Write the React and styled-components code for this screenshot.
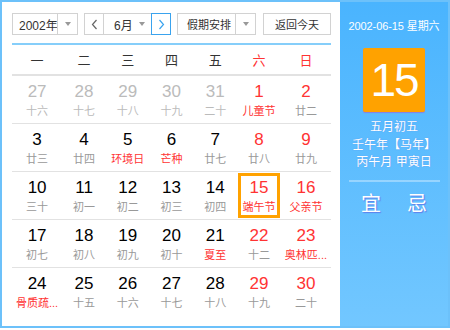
import React from 'react';
import styled, { createGlobalStyle } from 'styled-components';

const GlobalStyle = createGlobalStyle`
  body {
    margin: 0;
    background: #fff;
    font-family: "Liberation Sans", "Noto Sans CJK SC", sans-serif;
  }
`;

const Frame = styled.div`
  width: 450px;
  height: 328px;
  box-sizing: border-box;
  border: 2px solid #6cc1fa;
  display: flex;
`;

const Main = styled.div`
  width: 338px;
  box-sizing: border-box;
  padding: 11px 9px 0 10px;
`;

const Toolbar = styled.div`
  display: flex;
  height: 22px;
  gap: 6px;
`;

const SelectBox = styled.div`
  width: ${(p) => p.w}px;
  box-sizing: border-box;
  border: 1px solid #d2d2d2;
  display: flex;
  align-items: center;
  font-size: 12px;
  color: #333;
  background: #fff;
`;

const SelectText = styled.div`
  flex: 1;
  padding-left: ${(p) => p.pad || 6}px;
  white-space: nowrap;
  overflow: hidden;
  font-size: ${(p) => (p.small ? 11 : 12)}px;
`;

const ArrowPart = styled.div`
  width: 19px;
  flex: none;
  height: 100%;
  border-left: ${(p) => (p.plain ? 'none' : '1px solid #d2d2d2')};
  display: flex;
  align-items: center;
  justify-content: center;
  &::after {
    content: '';
    border-left: 3.5px solid transparent;
    border-right: 3.5px solid transparent;
    border-top: 4px solid #999;
  }
`;

const MonthGroup = styled.div`
  width: 87px;
  display: flex;
`;

const NavButton = styled.div`
  width: 20px;
  flex: none;
  box-sizing: border-box;
  border: 1px solid ${(p) => (p.active ? '#3aa3ee' : '#d2d2d2')};
  display: flex;
  align-items: center;
  justify-content: center;
  color: ${(p) => (p.active ? '#3aa3ee' : '#666')};
`;

const MonthBox = styled.div`
  flex: 1;
  min-width: 0;
  box-sizing: border-box;
  border-top: 1px solid #d2d2d2;
  border-bottom: 1px solid #d2d2d2;
  display: flex;
  align-items: center;
  font-size: 12px;
  color: #333;
`;

const TodayButton = styled.div`
  width: 68px;
  margin-left: 1px;
  box-sizing: border-box;
  border: 1px solid #d2d2d2;
  display: flex;
  align-items: center;
  justify-content: center;
  font-size: 11px;
  color: #333;
`;

const BlueRule = styled.div`
  height: 2px;
  background: #86cefa;
  margin-top: 8px;
`;

const Grid = styled.div`
  display: grid;
  grid-template-columns: repeat(7, 1fr);
`;

const HeadCell = styled.div`
  height: 29px;
  display: flex;
  align-items: center;
  justify-content: center;
  font-size: 13px;
  color: ${(p) => (p.red ? '#f33' : '#333')};
  border-bottom: 2px solid #e2e2e2;
`;

const DayCell = styled.div`
  height: 48px;
  box-sizing: border-box;
  border-bottom: ${(p) => (p.last ? 'none' : '1px solid #e2e2e2')};
  padding: 1px 0;
`;

const DayInner = styled.div`
  height: 100%;
  box-sizing: border-box;
  border: 3px solid ${(p) => (p.selected ? '#ffa200' : 'transparent')};
  margin: 0 1px;
  display: flex;
  flex-direction: column;
  align-items: center;
  padding-top: 2px;
`;

const DayNum = styled.div`
  font-size: 17px;
  line-height: 20px;
  color: ${(p) => p.color};
`;

const Lunar = styled.div`
  font-size: 11px;
  line-height: 15px;
  margin-top: 2px;
  color: ${(p) => (p.red ? '#f33' : p.dim ? '#bbb' : '#999')};
  white-space: nowrap;
`;

const Side = styled.div`
  flex: 1;
  background: linear-gradient(to bottom, #4ab4fe, #72c7ff);
  display: flex;
  flex-direction: column;
  align-items: center;
  color: #fff;
`;

const SideDate = styled.div`
  font-size: 11px;
  letter-spacing: -0.1px;
  margin-top: 17px;
  line-height: 14px;
`;

const BigDay = styled.div`
  width: 62px;
  height: 64px;
  margin-top: 15px;
  background: #ffa200;
  border-radius: 2px;
  box-shadow: 0 1px 1px #8b7fe0;
  display: flex;
  align-items: center;
  justify-content: center;
  font-size: 46px;
  letter-spacing: -2px;
  color: #fff;
`;

const SideLines = styled.div`
  margin-top: 7px;
  font-size: 12px;
  line-height: 17.5px;
  text-align: center;
  text-shadow: 0 0 1px rgba(90, 90, 220, 0.5);
`;

const SideRule = styled.div`
  width: 91px;
  height: 2px;
  background: rgba(255, 255, 255, 0.35);
  margin-top: 8px;
`;

const YiJi = styled.div`
  display: flex;
  gap: 26px;
  margin-top: 10px;
  font-size: 20px;
  line-height: 24px;
  text-shadow: 1px 1px 1px rgba(90, 80, 220, 0.6);
`;

const Chevron = ({ dir }) => (
  <svg width="7" height="11" viewBox="0 0 7 11">
    <path
      d={dir === 'left' ? 'M5.5 1 L1.5 5.5 L5.5 10' : 'M1.5 1 L5.5 5.5 L1.5 10'}
      fill="none"
      stroke="currentColor"
      strokeWidth="1.2"
    />
  </svg>
);

const weekdays = ['一', '二', '三', '四', '五', '六', '日'];

const days = [
  [27, '十六', 0], [28, '十七', 0], [29, '十八', 0], [30, '十九', 0], [31, '二十', 0], [1, '儿童节', 1, true], [2, '廿二', 1],
  [3, '廿三', 1], [4, '廿四', 1], [5, '环境日', 1, true], [6, '芒种', 1, true], [7, '廿七', 1], [8, '廿八', 1], [9, '廿九', 1],
  [10, '三十', 1], [11, '初一', 1], [12, '初二', 1], [13, '初三', 1], [14, '初四', 1], [15, '端午节', 1, true], [16, '父亲节', 1, true],
  [17, '初七', 1], [18, '初八', 1], [19, '初九', 1], [20, '初十', 1], [21, '夏至', 1, true], [22, '十二', 1], [23, '奥林匹...', 1, true],
  [24, '骨质疏...', 1, true], [25, '十五', 1], [26, '十六', 1], [27, '十七', 1], [28, '十八', 1], [29, '十九', 1], [30, '二十', 1],
];

export default function App() {
  return (
    <>
      <GlobalStyle />
      <Frame>
        <Main>
          <Toolbar>
            <SelectBox w={66}>
              <SelectText>2002年</SelectText>
              <ArrowPart />
            </SelectBox>
            <MonthGroup>
              <NavButton>
                <Chevron dir="left" />
              </NavButton>
              <MonthBox>
                <SelectText pad={10}>6月</SelectText>
                <ArrowPart plain />
              </MonthBox>
              <NavButton active>
                <Chevron dir="right" />
              </NavButton>
            </MonthGroup>
            <SelectBox w={79}>
              <SelectText pad={9} small>
                假期安排
              </SelectText>
              <ArrowPart />
            </SelectBox>
            <TodayButton>返回今天</TodayButton>
          </Toolbar>
          <BlueRule />
          <Grid>
            {weekdays.map((w, i) => (
              <HeadCell key={w} red={i >= 5}>
                {w}
              </HeadCell>
            ))}
            {days.map(([n, lunar, cur, fest], i) => {
              const col = i % 7;
              const weekend = col >= 5;
              const color = !cur ? '#bbb' : weekend ? '#f33' : '#000';
              return (
                <DayCell key={i} last={i >= 28}>
                  <DayInner selected={i === 19}>
                    <DayNum color={color}>{n}</DayNum>
                    <Lunar red={fest} dim={!cur}>
                      {lunar}
                    </Lunar>
                  </DayInner>
                </DayCell>
              );
            })}
          </Grid>
        </Main>
        <Side>
          <SideDate>2002-06-15 星期六</SideDate>
          <BigDay>15</BigDay>
          <SideLines>
            <div>五月初五</div>
            <div>壬午年【马年】</div>
            <div>丙午月 甲寅日</div>
          </SideLines>
          <SideRule />
          <YiJi>
            <span>宜</span>
            <span>忌</span>
          </YiJi>
        </Side>
      </Frame>
    </>
  );
}
